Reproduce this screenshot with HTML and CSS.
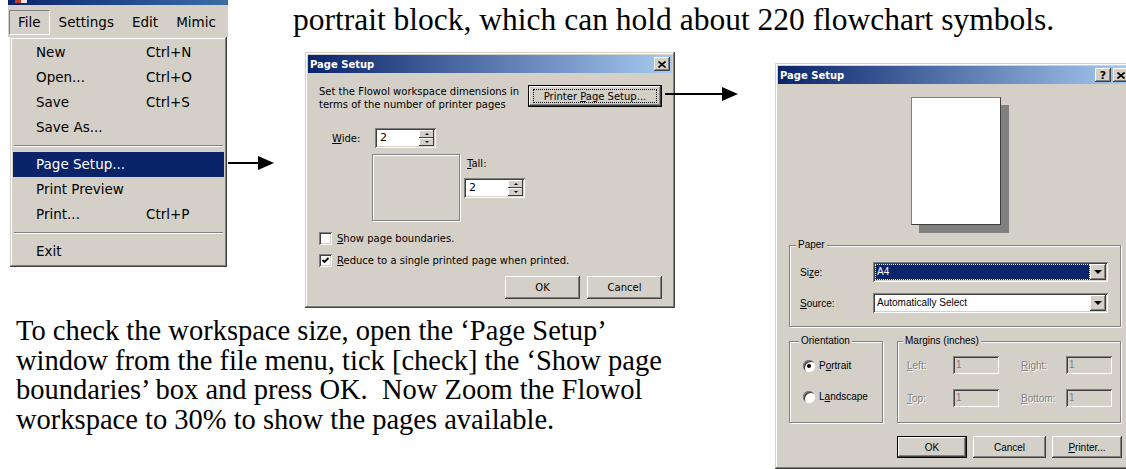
FILE: index.html
```html
<!DOCTYPE html>
<html lang="en">
<head>
    <meta charset="UTF-8">
    <meta name="viewport" content="width=device-width, initial-scale=1.0">
    <title>Flowol Page Setup</title>
    <link rel="stylesheet" href="styles.css">
</head>
<body>
<div class="page">

    <!-- File menu screenshot -->
    <div class="menu-shot">
        <div class="app-title"><span class="app-icon"></span></div>
        <div class="menubar">
            <span class="menubar-item pressed">File</span>
            <span class="menubar-item">Settings</span>
            <span class="menubar-item">Edit</span>
            <span class="menubar-item">Mimic</span>
        </div>
        <ul class="dropdown">
            <li><span>New</span><span>Ctrl+N</span></li>
            <li><span>Open...</span><span>Ctrl+O</span></li>
            <li><span>Save</span><span>Ctrl+S</span></li>
            <li><span>Save As...</span></li>
            <li class="sep"></li>
            <li class="active"><span>Page Setup...</span></li>
            <li><span>Print Preview</span></li>
            <li><span>Print...</span><span>Ctrl+P</span></li>
            <li class="sep"></li>
            <li><span>Exit</span></li>
        </ul>
    </div>

    <svg class="arrow arrow-menu" width="46" height="16" viewBox="0 0 46 16">
        <line x1="0" y1="8" x2="32" y2="8" stroke="#000" stroke-width="2"/>
        <polygon points="30,1 46,8 30,15" fill="#000"/>
    </svg>

    <p class="lead">portrait block, which can hold about 220 flowchart symbols.</p>

    <!-- Flowol page setup dialog -->
    <div class="dialog dialog-flowol">
        <div class="titlebar">
            <span>Page Setup</span>
            <span class="title-buttons">
                <span class="tbtn"><svg width="8" height="7" viewBox="0 0 8 7"><path d="M0.5 0.5 L7.5 6.5 M7.5 0.5 L0.5 6.5" stroke="#000" stroke-width="1.6"/></svg></span>
            </span>
        </div>
        <div class="flowol-body">
            <div class="flowol-top">
                <p class="intro">Set the Flowol workspace dimensions in<br>terms of the number of printer pages</p>
                <span class="btn btn-default setup-btn"><span class="focus-rect"><span>Printer <u>P</u>age Setup...</span></span></span>
            </div>
            <div class="pages-grid">
                <span class="wide-label"><u>W</u>ide:</span>
                <span class="spin spin-wide">
                    <span class="spin-value">2</span>
                    <span class="spin-arrows"><span class="spin-up"></span><span class="spin-down"></span></span>
                </span>
                <span class="pages-preview"></span>
                <div class="tall">
                    <span class="tall-label"><u>T</u>all:</span>
                    <span class="spin">
                        <span class="spin-value">2</span>
                        <span class="spin-arrows"><span class="spin-up"></span><span class="spin-down"></span></span>
                    </span>
                </div>
            </div>
            <div class="check"><span class="box"></span><span><u>S</u>how page boundaries.</span></div>
            <div class="check"><span class="box"><svg width="9" height="9" viewBox="0 0 9 9"><polyline points="1.5,4 3.5,6 7.5,2" fill="none" stroke="#000" stroke-width="1.8"/></svg></span><span><u>R</u>educe to a single printed page when printed.</span></div>
            <div class="button-row">
                <span class="btn">OK</span>
                <span class="btn">Cancel</span>
            </div>
        </div>
    </div>

    <svg class="arrow arrow-setup" width="73" height="16" viewBox="0 0 73 16">
        <line x1="0" y1="8" x2="59" y2="8" stroke="#000" stroke-width="2"/>
        <polygon points="57,1 73,8 57,15" fill="#000"/>
    </svg>

    <!-- Printer page setup dialog -->
    <div class="dialog dialog-printer">
        <div class="titlebar">
            <span>Page Setup</span>
            <span class="title-buttons">
                <span class="tbtn tbtn-help">?</span>
                <span class="tbtn"><svg width="8" height="7" viewBox="0 0 8 7"><path d="M0.5 0.5 L7.5 6.5 M7.5 0.5 L0.5 6.5" stroke="#000" stroke-width="1.6"/></svg></span>
            </span>
        </div>
        <div class="printer-body">
            <div class="paper-preview"></div>

            <fieldset class="group group-paper">
                <legend>Paper</legend>
                <div class="paper-grid">
                    <span>Si<u>z</u>e:</span>
                    <span class="combo selected"><span class="combo-value">A4</span><span class="combo-btn"></span></span>
                    <span><u>S</u>ource:</span>
                    <span class="combo"><span class="combo-value">Automatically Select</span><span class="combo-btn"></span></span>
                </div>
            </fieldset>

            <div class="group-row">
                <fieldset class="group group-orient">
                    <legend>Orientation</legend>
                    <div class="radio"><span class="dot on"></span><span>P<u>o</u>rtrait</span></div>
                    <div class="radio"><span class="dot"></span><span>L<u>a</u>ndscape</span></div>
                </fieldset>
                <fieldset class="group group-margins">
                    <legend>Margins (inches)</legend>
                    <div class="margin-grid">
                        <span class="off"><u>L</u>eft:</span><span class="edit">1</span>
                        <span class="off"><u>R</u>ight:</span><span class="edit">1</span>
                        <span class="off"><u>T</u>op:</span><span class="edit">1</span>
                        <span class="off"><u>B</u>ottom:</span><span class="edit">1</span>
                    </div>
                </fieldset>
            </div>

            <div class="button-row">
                <span class="btn btn-default">OK</span>
                <span class="btn btn-cancel">Cancel</span>
                <span class="btn"><span><u>P</u>rinter...</span></span>
            </div>
        </div>
    </div>

    <p class="body-text">To check the workspace size, open the &lsquo;Page Setup&rsquo;<br>window from the file menu, tick [check] the &lsquo;Show page<br>boundaries&rsquo; box and press OK.&nbsp; Now Zoom the Flowol<br>workspace to 30% to show the pages available.</p>

</div>
</body>
</html>
```

FILE: styles.css
```css
* {
    box-sizing: border-box;
}

body {
    margin: 0;
    background-color: #fff;
}

.page {
    display: grid;
    grid-template-columns: 228px 77px 370px 100px 351px;
    grid-template-rows: 52px 256px 161px;
    width: 1126px;
    height: 469px;
    overflow: hidden;
    color: #000;
}

/* ---------- file menu ---------- */

.menu-shot {
    grid-column: 1;
    grid-row: 1 / 3;
    margin-left: 8px;
    width: 220px;
    font-family: "DejaVu Sans", sans-serif;
    font-size: 13.5px;
}

.app-title {
    display: flex;
    height: 5px;
    padding-left: 7px;
    background: linear-gradient(90deg, #0a246a, #3a6ea5);
}

.app-icon {
    width: 12px;
    height: 3px;
    background: linear-gradient(90deg, #c0392b 50%, #e8e8e8 50%);
}

.menubar {
    display: flex;
    height: 32px;
    padding: 5px 0 0 1px;
    background-color: #d4d0c8;
}

.menubar-item {
    height: 25px;
    line-height: 23px;
    padding: 0 8px;
    border: 1px solid transparent;
}

.menubar-item.pressed {
    border-color: #808080 #fff #fff #808080;
}

.dropdown {
    list-style: none;
    margin: 0 0 0 2px;
    width: 217px;
    height: 230px;
    padding: 3px;
    background-color: #d4d0c8;
    box-shadow: inset -1px -1px #404040, inset 1px 1px #d4d0c8, inset -2px -2px #808080, inset 2px 2px #fff;
}

.dropdown li {
    display: grid;
    grid-template-columns: 110px auto;
    height: 25px;
    line-height: 25px;
    padding-left: 23px;
}

.dropdown li.sep {
    display: block;
    height: 2px;
    margin: 5px 1px;
    padding: 0;
    border-top: 1px solid #808080;
    border-bottom: 1px solid #fff;
}

.dropdown li.active {
    background-color: #0a246a;
    color: #fff;
}

/* ---------- arrows and text ---------- */

.arrow {
    display: block;
}

.arrow-menu {
    grid-column: 2;
    grid-row: 1 / 3;
    margin-top: 155px;
}

.arrow-setup {
    grid-column: 4;
    grid-row: 2;
    margin: 34px 0 0 -10px;
}

.lead {
    grid-column: 2 / 6;
    grid-row: 1;
    margin: 0;
    padding: 3px 0 0 65px;
    font-family: "Liberation Serif", serif;
    font-size: 31.5px;
    line-height: 33px;
    white-space: nowrap;
}

.body-text {
    grid-column: 1 / 5;
    grid-row: 3;
    margin: 0;
    padding: 8px 0 0 16px;
    font-family: "Liberation Serif", serif;
    font-size: 28.5px;
    line-height: 29.5px;
    white-space: nowrap;
}

/* ---------- shared dialog parts ---------- */

.dialog {
    padding: 3px;
    background-color: #d4d0c8;
    box-shadow: inset -1px -1px #404040, inset 1px 1px #d4d0c8, inset -2px -2px #808080, inset 2px 2px #fff;
}

.titlebar {
    display: flex;
    justify-content: space-between;
    align-items: center;
    height: 18px;
    padding: 0 2px;
    background: linear-gradient(90deg, #0a246a, #a6caf0);
    color: #fff;
    font-family: "DejaVu Sans", sans-serif;
    font-size: 10px;
    font-weight: bold;
}

.title-buttons {
    display: flex;
    gap: 2px;
}

.tbtn {
    display: flex;
    align-items: center;
    justify-content: center;
    width: 16px;
    height: 14px;
    background-color: #d4d0c8;
    color: #000;
    box-shadow: inset -1px -1px #404040, inset 1px 1px #fff, inset -2px -2px #808080, inset 2px 2px #d4d0c8;
}

.tbtn-help {
    font-size: 11px;
}

.btn {
    display: flex;
    align-items: center;
    justify-content: center;
    height: 23px;
    background-color: #d4d0c8;
    box-shadow: inset -1px -1px #404040, inset 1px 1px #fff, inset -2px -2px #808080, inset 2px 2px #d4d0c8;
}

.btn-default {
    border: 1px solid #000;
    box-shadow: inset -1px -1px #404040, inset 1px 1px #fff, inset -2px -2px #808080;
}

.focus-rect {
    display: flex;
    align-items: center;
    justify-content: center;
    flex: 1;
    align-self: stretch;
    border: 1px dotted #000;
}

.button-row {
    display: flex;
    justify-content: flex-end;
}

/* ---------- flowol dialog ---------- */

.dialog-flowol {
    grid-column: 3;
    grid-row: 2;
    height: 256px;
}

.flowol-body {
    padding: 12px 10px 10px 11px;
    font-family: "DejaVu Sans", sans-serif;
    font-size: 10px;
}

.flowol-top {
    display: flex;
    justify-content: space-between;
}

.intro {
    margin: 0;
    line-height: 13px;
}

.setup-btn {
    width: 134px;
    height: 22px;
    padding: 3px 4px;
}

.pages-grid {
    display: grid;
    grid-template-columns: 40px 92px 61px;
    grid-template-rows: 20px 67px;
    row-gap: 6px;
    margin: 17px 0 0 13px;
}

.wide-label {
    align-self: center;
}

.spin {
    display: flex;
    width: 61px;
    height: 20px;
    padding: 2px;
    background-color: #fff;
    box-shadow: inset 1px 1px #808080, inset -1px -1px #fff, inset 2px 2px #404040, inset -2px -2px #d4d0c8;
}

.spin-wide {
    margin-left: 3px;
}

.spin-value {
    flex: 1;
    padding-left: 3px;
    line-height: 16px;
    font-size: 11px;
}

.spin-arrows {
    display: flex;
    flex-direction: column;
    width: 15px;
}

.spin-up,
.spin-down {
    display: flex;
    align-items: center;
    justify-content: center;
    height: 8px;
    background-color: #d4d0c8;
    box-shadow: inset -1px -1px #404040, inset 1px 1px #fff;
}

.spin-up::before {
    content: "";
    border: 2px solid transparent;
    border-top: 0;
    border-bottom: 2px solid #000;
}

.spin-down::before {
    content: "";
    border: 2px solid transparent;
    border-bottom: 0;
    border-top: 2px solid #000;
}

.pages-preview {
    grid-column: 2;
    grid-row: 2;
    width: 88px;
    height: 67px;
    border: 1px solid #808080;
    box-shadow: inset 1px 1px #fff, 1px 1px #fff;
}

.tall {
    grid-column: 3;
    grid-row: 2;
    display: flex;
    flex-direction: column;
}

.tall-label {
    padding: 3px 0 0 3px;
    line-height: 14px;
    margin-bottom: 7px;
}

.check {
    display: flex;
    align-items: center;
    height: 13px;
    margin-top: 9px;
}

.pages-grid + .check {
    margin-top: 11px;
}

.box {
    display: flex;
    align-items: center;
    justify-content: center;
    width: 13px;
    height: 13px;
    margin-right: 5px;
    background-color: #fff;
    box-shadow: inset 1px 1px #808080, inset -1px -1px #fff, inset 2px 2px #404040, inset -2px -2px #d4d0c8;
}

.dialog-flowol .button-row {
    gap: 7px;
    margin-top: 9px;
}

.dialog-flowol .button-row .btn {
    width: 75px;
}

/* ---------- printer dialog ---------- */

.dialog-printer {
    grid-column: 5;
    grid-row: 2 / 4;
    width: 359px;
    height: 406px;
    margin-top: 11px;
}

.printer-body {
    padding: 0 9px 0 11px;
    font-family: "Liberation Sans", sans-serif;
    font-size: 10px;
}

.paper-preview {
    width: 90px;
    height: 128px;
    margin: 13px auto 0;
    background-color: #fff;
    border: 1px solid #404040;
    border-top-color: #808080;
    border-left-color: #808080;
    box-shadow: 8px 8px 0 #808080;
}

.group {
    margin: 0;
    min-width: 0;
    border: 1px solid #808080;
    box-shadow: inset 1px 1px #fff, 1px 1px #fff;
}

.group legend {
    margin-left: -4px;
    padding: 0 2px;
    line-height: 12px;
    background-color: #d4d0c8;
}

.group-paper {
    width: 332px;
    margin-top: 14px;
    padding: 11px 12px 13px 10px;
}

.paper-grid {
    display: grid;
    grid-template-columns: 73px 235px;
    grid-auto-rows: 20px;
    row-gap: 11px;
    align-items: center;
}

.combo {
    display: flex;
    height: 20px;
    padding: 2px;
    background-color: #fff;
    box-shadow: inset 1px 1px #808080, inset -1px -1px #fff, inset 2px 2px #404040, inset -2px -2px #d4d0c8;
}

.combo-value {
    flex: 1;
    padding-left: 2px;
    line-height: 16px;
}

.combo.selected .combo-value {
    background-color: #0a246a;
    color: #fff;
    outline: 1px dotted #fff;
    outline-offset: -1px;
}

.combo-btn {
    display: flex;
    align-items: center;
    justify-content: center;
    width: 16px;
    background-color: #d4d0c8;
    box-shadow: inset -1px -1px #404040, inset 1px 1px #fff, inset -2px -2px #808080, inset 2px 2px #d4d0c8;
}

.combo-btn::before {
    content: "";
    border: 4px solid transparent;
    border-bottom: 0;
    border-top: 4px solid #000;
}

.group-row {
    display: flex;
    gap: 14px;
    margin-top: 8px;
}

.group-orient {
    width: 94px;
    padding: 12px 0 17px 13px;
}

.radio {
    display: flex;
    align-items: center;
    height: 13px;
}

.radio + .radio {
    margin-top: 18px;
}

.dot {
    display: flex;
    align-items: center;
    justify-content: center;
    width: 12px;
    height: 12px;
    margin-right: 4px;
    border-radius: 50%;
    background-color: #fff;
    box-shadow: inset 1px 1px #808080, inset -1px -1px #fff, inset 2px 2px #404040;
}

.dot.on::after {
    content: "";
    width: 4px;
    height: 4px;
    border-radius: 50%;
    background-color: #000;
}

.group-margins {
    width: 224px;
    padding: 9px 0 15px 9px;
}

.margin-grid {
    display: grid;
    grid-template-columns: 46px 68px 45px 47px;
    grid-auto-rows: 18px;
    row-gap: 15px;
    align-items: center;
}

.off {
    color: #808080;
    text-shadow: 1px 1px 0 #fff;
}

.edit {
    width: 46px;
    height: 18px;
    padding-left: 3px;
    line-height: 18px;
    color: #808080;
    box-shadow: inset 1px 1px #808080, inset -1px -1px #fff, inset 2px 2px #404040, inset -2px -2px #d4d0c8;
}

.dialog-printer .button-row {
    gap: 6px;
    margin-top: 13px;
}

.dialog-printer .button-row .btn {
    width: 70px;
    height: 22px;
}

.dialog-printer .button-row .btn-cancel {
    width: 73px;
}
```
